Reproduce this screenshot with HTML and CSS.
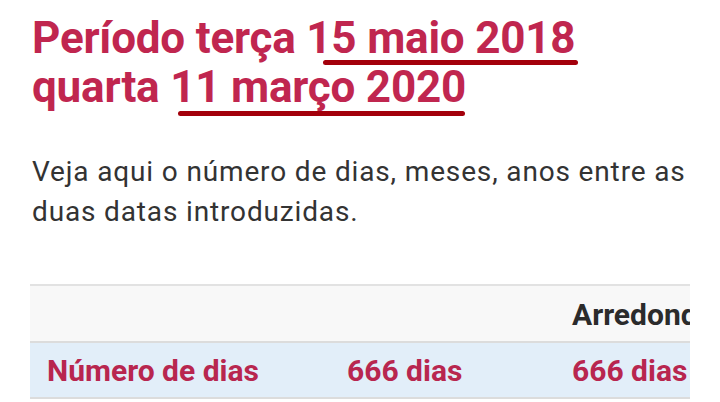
FILE: index.html
```html
<!DOCTYPE html>
<html lang="pt">
<head>
<meta charset="utf-8">
<link rel="stylesheet" href="styles.css">
</head>
<body>
<div class="page">
  <h1 class="title">Período terça 1<span class="mark mark-a">5 maio 2018</span><br>quarta <span class="mark mark-b">11 março 2020</span></h1>
  <p class="intro">Veja aqui o número de dias, meses, anos entre as duas datas introduzidas.</p>
  <div class="table-clip">
    <table class="results">
      <thead>
        <tr><th class="c1"></th><th class="c2"></th><th class="c3">Arredondado</th></tr>
      </thead>
      <tbody>
        <tr><td class="c1">Número de dias</td><td class="c2">666 dias</td><td class="c3">666 dias</td></tr>
      </tbody>
    </table>
  </div>
</div>
</body>
</html>
```
FILE: styles.css
```css
html, body {
  margin: 0;
  padding: 0;
  background: #ffffff;
}
body {
  font-family: Roboto, "Liberation Sans", sans-serif;
  width: 720px;
  height: 402px;
  overflow: hidden;
}
.page {
  padding: 14px 0 0 32px;
}
.title {
  margin: 0;
  font-size: 44px;
  line-height: 49px;
  font-weight: 700;
  color: #c0264f;
  letter-spacing: -0.2px;
}
.mark {
  position: relative;
}
.mark::after {
  content: "";
  position: absolute;
  height: 5px;
  border-radius: 3px;
  background: #a3000b;
}
.mark-a::after {
  left: -8px;
  right: -3px;
  bottom: -1px;
}
.mark-b::after {
  left: 8px;
  right: 1px;
  bottom: -3px;
}
.intro {
  margin: 40px 0 0 0;
  width: 680px;
  font-size: 28px;
  line-height: 40px;
  letter-spacing: 0.85px;
  color: #333333;
}
.table-clip {
  margin: 52px 0 0 -2px;
  width: 660px;
  overflow: hidden;
}
.results {
  border-collapse: collapse;
  width: 800px;
  table-layout: fixed;
  font-size: 30px;
  font-weight: 700;
}
.results th, .results td {
  text-align: left;
  padding: 0 0 0 17px;
  white-space: nowrap;
}
.results .c1 { width: 283px; }
.results .c2 { width: 208px; }
.results .c3 { width: 292px; }
.results thead tr {
  background: #f8f8f8;
  border-top: 2px solid #e2e2e2;
  height: 57px;
}
.results thead th {
  color: #2b2b2b;
  vertical-align: bottom;
  padding-bottom: 9px;
}
.results tbody tr {
  background: #e2eef9;
  border-top: 2px solid #dcdcdc;
  border-bottom: 2px solid #dcdcdc;
  height: 56px;
}
.results tbody td {
  color: #b8264f;
}
```
